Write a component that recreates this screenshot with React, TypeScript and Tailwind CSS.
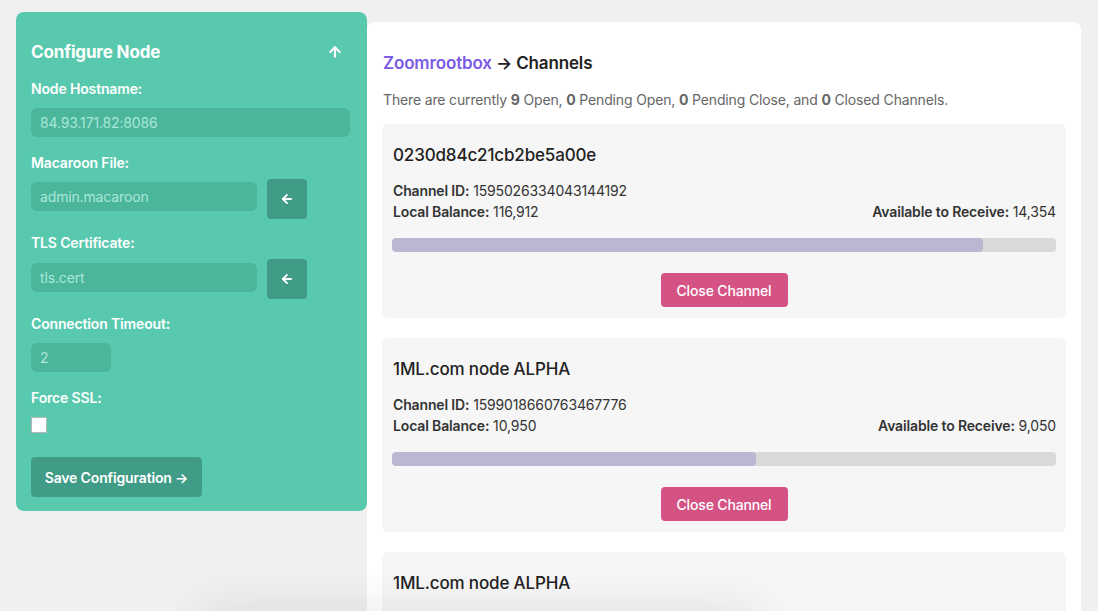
import React from "react";
import { ArrowLeft, ArrowUp } from "lucide-react";

interface Channel {
  id: string;
  name: string;
  chanId: string;
  local: number;
  remote: number;
}

const channels: Channel[] = [
  { id: "a", name: "0230d84c21cb2be5a00e", chanId: "1595026334043144192", local: 116912, remote: 14354 },
  { id: "b", name: "1ML.com node ALPHA", chanId: "1599018660763467776", local: 10950, remote: 9050 },
  { id: "c", name: "1ML.com node ALPHA", chanId: "1599018660763467777", local: 10950, remote: 9050 },
];

const Label: React.FC<{ children: React.ReactNode; className?: string }> = ({ children, className }) => (
  <div className={"text-[14px] leading-5 font-semibold text-white " + (className ?? "")}>{children}</div>
);

const ConfigPanel: React.FC = () => (
  <div className="ml-4 mt-3 w-[351px] shrink-0 rounded-lg bg-[#58c9ae] px-[15px] pt-[28px] pb-[14px]">
    <div className="flex items-center justify-between pr-[9px]">
      <h2 className="text-[17px] leading-6 font-bold text-white">Configure Node</h2>
      <ArrowUp size={16} strokeWidth={3.2} className="text-white" />
    </div>

    <Label className="mt-[15px]">Node Hostname:</Label>
    <div className="mt-[9px] h-[29px] w-[319px] rounded-md bg-[#4bb69c] px-[9px] text-[14px] leading-[29px] text-[#a9e8d7]">
      84.93.171.82:8086
    </div>

    <Label className="mt-[16px]">Macaroon File:</Label>
    <div className="mt-[6px] flex h-10 items-start gap-[10px]">
      <div className="mt-[3px] h-[29px] w-[226px] rounded-md bg-[#4bb69c] px-[9px] text-[14px] leading-[29px] text-[#a9e8d7]">
        admin.macaroon
      </div>
      <button className="flex h-10 w-10 items-center justify-center rounded bg-[#409c87] text-white">
        <ArrowLeft size={14} strokeWidth={3.2} />
      </button>
    </div>

    <Label className="mt-[14px]">TLS Certificate:</Label>
    <div className="mt-[6px] flex h-10 items-start gap-[10px]">
      <div className="mt-[4px] h-[29px] w-[226px] rounded-md bg-[#4bb69c] px-[9px] text-[14px] leading-[29px] text-[#a9e8d7]">
        tls.cert
      </div>
      <button className="flex h-10 w-10 items-center justify-center rounded bg-[#409c87] text-white">
        <ArrowLeft size={14} strokeWidth={3.2} />
      </button>
    </div>

    <Label className="mt-[15px]">Connection Timeout:</Label>
    <div className="mt-[9px] h-[29px] w-[80px] rounded-md bg-[#4bb69c] px-[9px] text-[14px] leading-[29px] text-[#a9e8d7]">
      2
    </div>

    <Label className="mt-[16px]">Force SSL:</Label>
    <div className="mt-[9px] h-4 w-4 border border-[#b8b8b8] bg-white" />

    <button className="mt-[24px] h-10 w-[171px] rounded bg-[#409c87] text-[14px] font-semibold text-white">
      Save Configuration →
    </button>
  </div>
);

const ChannelCard: React.FC<{ ch: Channel }> = ({ ch }) => {
  const pct = (ch.local / (ch.local + ch.remote)) * 100;
  return (
    <div className="rounded-md bg-[#f6f6f6] px-[10px] pt-[19px] pb-[11px]">
      <h3 className="pl-px text-[17px] leading-6 font-medium text-[#222]">{ch.name}</h3>
      <div className="mt-[13px] pl-px text-[14px] leading-[21px] text-[#333]">
        <div>
          <span className="font-semibold">Channel ID:</span> {ch.chanId}
        </div>
        <div className="flex justify-between">
          <div>
            <span className="font-semibold">Local Balance:</span> {ch.local.toLocaleString("en-US")}
          </div>
          <div>
            <span className="font-semibold">Available to Receive:</span> {ch.remote.toLocaleString("en-US")}
          </div>
        </div>
      </div>
      <div className="mt-[16px] h-[14px] overflow-hidden rounded bg-[#d9d9d9]">
        <div className="h-full rounded bg-[#b9b7d2]" style={{ width: pct + "%" }} />
      </div>
      <div className="mt-[21px] flex justify-center">
        <button className="h-[34px] w-[127px] rounded bg-[#d55384] text-[14px] font-medium text-white">
          Close Channel
        </button>
      </div>
    </div>
  );
};

export default function App() {
  return (
    <div
      className="relative h-[611px] overflow-hidden bg-[#f0f0f0] tracking-[-0.15px]"
      style={{ fontFamily: "Inter, 'Noto Sans', sans-serif" }}
    >
      <div className="flex items-start">
        <ConfigPanel />
        <div className="mt-[22px] w-[714px] shrink-0 rounded-lg bg-white px-[15px] pt-[29px]">
          <h1 className="pl-px text-[17px] leading-6 font-semibold text-[#222]">
            <span className="text-[#7b5ae6]">Zoomrootbox</span> → Channels
          </h1>
          <p className="mt-[15px] pl-px text-[14px] leading-5 text-[#666]">
            There are currently <b>9</b> Open, <b>0</b> Pending Open, <b>0</b> Pending Close, and <b>0</b> Closed
            Channels.
          </p>
          <div className="mt-[14px] flex flex-col gap-5">
            {channels.map((ch) => (
              <ChannelCard key={ch.id} ch={ch} />
            ))}
          </div>
        </div>
      </div>
      <div className="pointer-events-none absolute left-[210px] top-[625px] h-[40px] w-[540px] rounded-full shadow-[0_0_45px_20px_rgba(0,0,0,0.08)]" />
    </div>
  );
}
